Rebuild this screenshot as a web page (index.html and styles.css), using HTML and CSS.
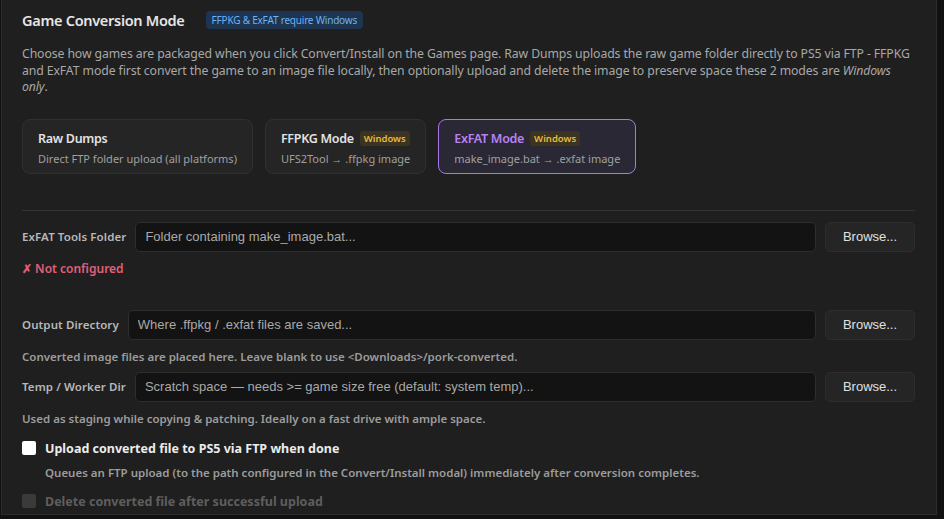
FILE: index.html
```html
<!DOCTYPE html>
<html lang="en">
  <head>
    <meta charset="UTF-8" />
    <meta name="viewport" content="width=device-width, initial-scale=1.0" />
    <title>Game Conversion Mode</title>
    <link rel="stylesheet" href="styles.css">
  </head>
  <body>
    <div class="panel">
      <div class="section-head">
        <h2>Game Conversion Mode</h2>
        <span class="info-badge">FFPKG &amp; ExFAT require Windows</span>
      </div>
      <p class="intro">
        Choose how games are packaged when you click Convert/Install on the Games page. Raw Dumps uploads the raw game folder directly to PS5 via FTP - FFPKG and ExFAT mode first convert the game to an image file locally, then optionally upload and delete the image to preserve space these 2 modes are <em>Windows only</em>.
      </p>

      <div class="modes">
        <div class="mode">
          <div class="mode-title">Raw Dumps</div>
          <div class="mode-sub">Direct FTP folder upload (all platforms)</div>
        </div>
        <div class="mode">
          <div class="mode-title">FFPKG Mode <span class="win">Windows</span></div>
          <div class="mode-sub">UFS2Tool → .ffpkg image</div>
        </div>
        <div class="mode active">
          <div class="mode-title">ExFAT Mode <span class="win">Windows</span></div>
          <div class="mode-sub">make_image.bat → .exfat image</div>
        </div>
      </div>

      <hr class="divider" />

      <div class="field">
        <div class="field-row">
          <label>ExFAT Tools Folder</label>
          <input type="text" placeholder="Folder containing make_image.bat..." />
          <button>Browse...</button>
        </div>
        <div class="status-bad">✗ Not configured</div>
      </div>

      <div class="field spaced">
        <div class="field-row">
          <label>Output Directory</label>
          <input type="text" placeholder="Where .ffpkg / .exfat files are saved..." />
          <button>Browse...</button>
        </div>
        <div class="help">Converted image files are placed here. Leave blank to use &lt;Downloads&gt;/pork-converted.</div>
      </div>

      <div class="field">
        <div class="field-row">
          <label>Temp / Worker Dir</label>
          <input type="text" placeholder="Scratch space — needs >= game size free (default: system temp)..." />
          <button>Browse...</button>
        </div>
        <div class="help">Used as staging while copying &amp; patching. Ideally on a fast drive with ample space.</div>
      </div>

      <label class="check">
        <input type="checkbox" />
        <span>Upload converted file to PS5 via FTP when done</span>
      </label>
      <div class="check-help">Queues an FTP upload (to the path configured in the Convert/Install modal) immediately after conversion completes.</div>

      <label class="check disabled">
        <input type="checkbox" disabled />
        <span>Delete converted file after successful upload</span>
      </label>
    </div>
  </body>
</html>
```

FILE: styles.css
```css
body {
  margin: 0;
  padding: 0;
  background: #111111;
  font-family: "Noto Sans", "Open Sans", sans-serif;
  color: #d8d8d8;
  height: 519px;
  overflow: hidden;
}
.panel {
  width: 893px;
  height: 514px;
  margin-left: 1px;
  padding: 0 21px 0 20px;
  background: #1f1f1f;
  border-left: 1px solid #2c2c2c;
  border-right: 1px solid #2c2c2c;
  border-bottom: 1px solid #2c2c2c;
  overflow: hidden;
}
.section-head {
  display: flex;
  align-items: center;
  gap: 21px;
  padding-top: 10px;
}
.section-head h2 {
  margin: 0;
  font-size: 14.5px;
  font-weight: 600;
  letter-spacing: -0.3px;
  color: #e6e6e6;
}
.info-badge {
  background: #1d3550;
  color: #6fb2f2;
  font-size: 10px;
  letter-spacing: -0.2px;
  padding: 2px 6px;
  border-radius: 4px;
}
.intro {
  margin: 16px 0 0 0;
  font-size: 12.25px;
  line-height: 16.5px;
  letter-spacing: -0.1px;
  color: #a8a8a8;
}
.intro em {
  font-style: italic;
}
.modes {
  display: flex;
  gap: 12px;
  margin-top: 23px;
}
.mode {
  background: #252525;
  border: 1px solid #303030;
  border-radius: 8px;
  padding: 10px 15px;
  height: 33px;
}
.mode.active {
  background: #2a2834;
  border-color: #a878e8;
}
.mode-title {
  font-size: 12.5px;
  font-weight: 600;
  letter-spacing: -0.3px;
  color: #e2e2e2;
  display: flex;
  align-items: center;
  gap: 6px;
}
.mode.active .mode-title {
  color: #b783f2;
}
.win {
  background: #3c3420;
  color: #e8bb3a;
  font-size: 9.5px;
  font-weight: 600;
  letter-spacing: 0;
  padding: 1px 4px;
  border-radius: 3px;
}
.mode-sub {
  margin-top: 4px;
  font-size: 11px;
  color: #a0a0a0;
}
.divider {
  border: 0;
  border-top: 1px solid #333333;
  margin: 36px 0 11px 0;
}
.field-row {
  display: flex;
  align-items: center;
  gap: 9px;
}
.field-row label {
  font-size: 11.5px;
  font-weight: 600;
  letter-spacing: 0.1px;
  color: #b8b8b8;
  white-space: nowrap;
}
.field-row input {
  flex: 1;
  height: 30px;
  box-sizing: border-box;
  background: #131313;
  border: 1px solid #2e2e2e;
  border-radius: 5px;
  padding: 0 9px;
  color: #ddd;
  font-family: "Liberation Sans", Arial, sans-serif;
  font-size: 13px;
}
.field-row input::placeholder {
  color: #a9a9a9;
}
.field-row button {
  width: 90px;
  height: 30px;
  background: #252525;
  border: 1px solid #2e2e2e;
  border-radius: 5px;
  color: #e0e0e0;
  font-family: "Liberation Sans", Arial, sans-serif;
  font-size: 13px;
}
.status-bad {
  margin-top: 8px;
  font-size: 12px;
  font-weight: 600;
  color: #e0607a;
}
.spaced {
  margin-top: 33px;
}
.help {
  margin-top: 9px;
  font-size: 11.5px;
  font-weight: 600;
  color: #9c9c9c;
  margin-bottom: 8px;
}
.check {
  display: flex;
  align-items: center;
  gap: 9px;
  margin-top: 14px;
  font-size: 12.5px;
  font-weight: 700;
  color: #ececec;
}
.check input {
  width: 14px;
  height: 14px;
  margin: 0;
  appearance: none;
  background: #ffffff;
  border-radius: 2px;
}
.check-help {
  margin: 8px 0 0 23px;
  font-size: 11.5px;
  font-weight: 600;
  color: #9c9c9c;
}
.check.disabled {
  color: #5e5e5e;
  margin-top: 13px;
}
.check.disabled input {
  background: #3a3a3a;
}
```
